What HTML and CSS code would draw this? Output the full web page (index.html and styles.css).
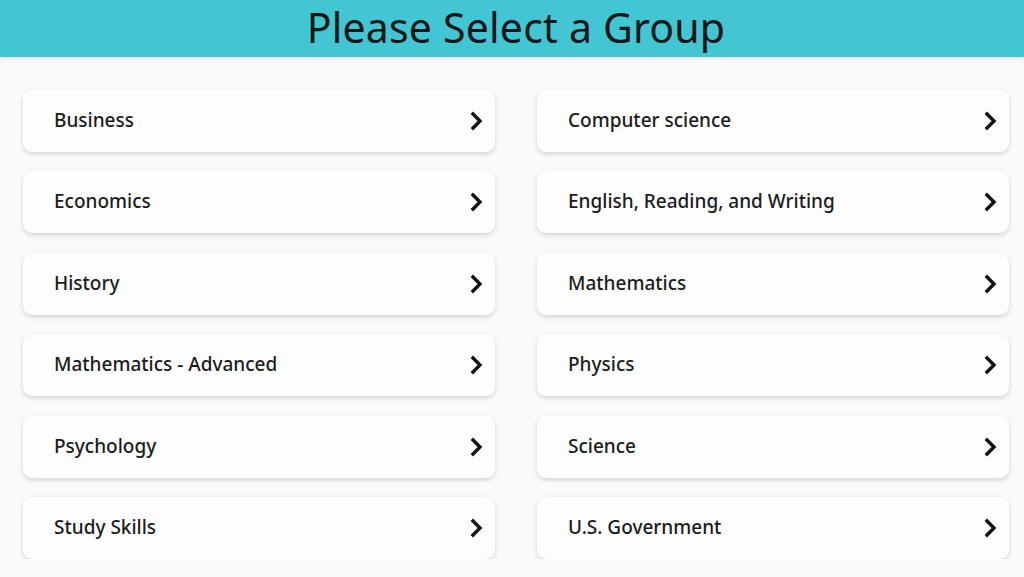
FILE: index.html
```html
<!DOCTYPE html>
<html>
<head>
<meta charset="utf-8">
<link rel="stylesheet" href="styles.css">
</head>
<body>
<header class="top">
  <h1 class="title">Please Select a Group</h1>
</header>
<main class="groups">
  <a class="card"><span class="label">Business</span><svg class="chev" viewBox="0 0 14 20"><path d="M3 3 L10 10 L3 17"/></svg></a>
  <a class="card"><span class="label">Computer science</span><svg class="chev" viewBox="0 0 14 20"><path d="M3 3 L10 10 L3 17"/></svg></a>
  <a class="card"><span class="label">Economics</span><svg class="chev" viewBox="0 0 14 20"><path d="M3 3 L10 10 L3 17"/></svg></a>
  <a class="card"><span class="label">English, Reading, and Writing</span><svg class="chev" viewBox="0 0 14 20"><path d="M3 3 L10 10 L3 17"/></svg></a>
  <a class="card"><span class="label">History</span><svg class="chev" viewBox="0 0 14 20"><path d="M3 3 L10 10 L3 17"/></svg></a>
  <a class="card"><span class="label">Mathematics</span><svg class="chev" viewBox="0 0 14 20"><path d="M3 3 L10 10 L3 17"/></svg></a>
  <a class="card"><span class="label">Mathematics - Advanced</span><svg class="chev" viewBox="0 0 14 20"><path d="M3 3 L10 10 L3 17"/></svg></a>
  <a class="card"><span class="label">Physics</span><svg class="chev" viewBox="0 0 14 20"><path d="M3 3 L10 10 L3 17"/></svg></a>
  <a class="card"><span class="label">Psychology</span><svg class="chev" viewBox="0 0 14 20"><path d="M3 3 L10 10 L3 17"/></svg></a>
  <a class="card"><span class="label">Science</span><svg class="chev" viewBox="0 0 14 20"><path d="M3 3 L10 10 L3 17"/></svg></a>
  <a class="card"><span class="label">Study Skills</span><svg class="chev" viewBox="0 0 14 20"><path d="M3 3 L10 10 L3 17"/></svg></a>
  <a class="card"><span class="label">U.S. Government</span><svg class="chev" viewBox="0 0 14 20"><path d="M3 3 L10 10 L3 17"/></svg></a>
</main>
</body>
</html>
```

FILE: styles.css
```css
html, body {
  margin: 0;
  padding: 0;
  background: #fafafa;
  font-family: "Noto Sans", "DejaVu Sans", sans-serif;
  color: #1a1a1a;
}

.top {
  height: 57px;
  background: #42c6d3;
  display: flex;
  align-items: center;
  justify-content: center;
  box-shadow: 0 1px 3px rgba(0,0,0,0.12);
}

.title {
  margin: 0 0 0 8px;
  font-family: "Noto Sans", sans-serif;
  font-weight: 400;
  font-size: 41px;
  line-height: 57px;
  color: #151515;
  letter-spacing: 0.2px;
  position: relative;
  top: -1px;
}

.groups {
  display: grid;
  grid-template-columns: 472px 472px;
  column-gap: 42px;
  row-gap: 19.4px;
  padding: 33px 15px 0 23px;
}

.card {
  height: 62px;
  background: #fdfdfd;
  border-radius: 9px;
  box-shadow: 0 2px 5px rgba(0,0,0,0.16);
  display: flex;
  align-items: center;
  justify-content: space-between;
  padding: 0 11px 0 31px;
  box-sizing: border-box;
}

.label {
  font-size: 19px;
  font-weight: 500;
  color: #1b1b1b;
  position: relative;
  top: -1px;
}

.chev {
  width: 14px;
  height: 20px;
  fill: none;
  stroke: #111;
  stroke-width: 3.4;
  stroke-linecap: square;
  stroke-linejoin: miter;
}
```
